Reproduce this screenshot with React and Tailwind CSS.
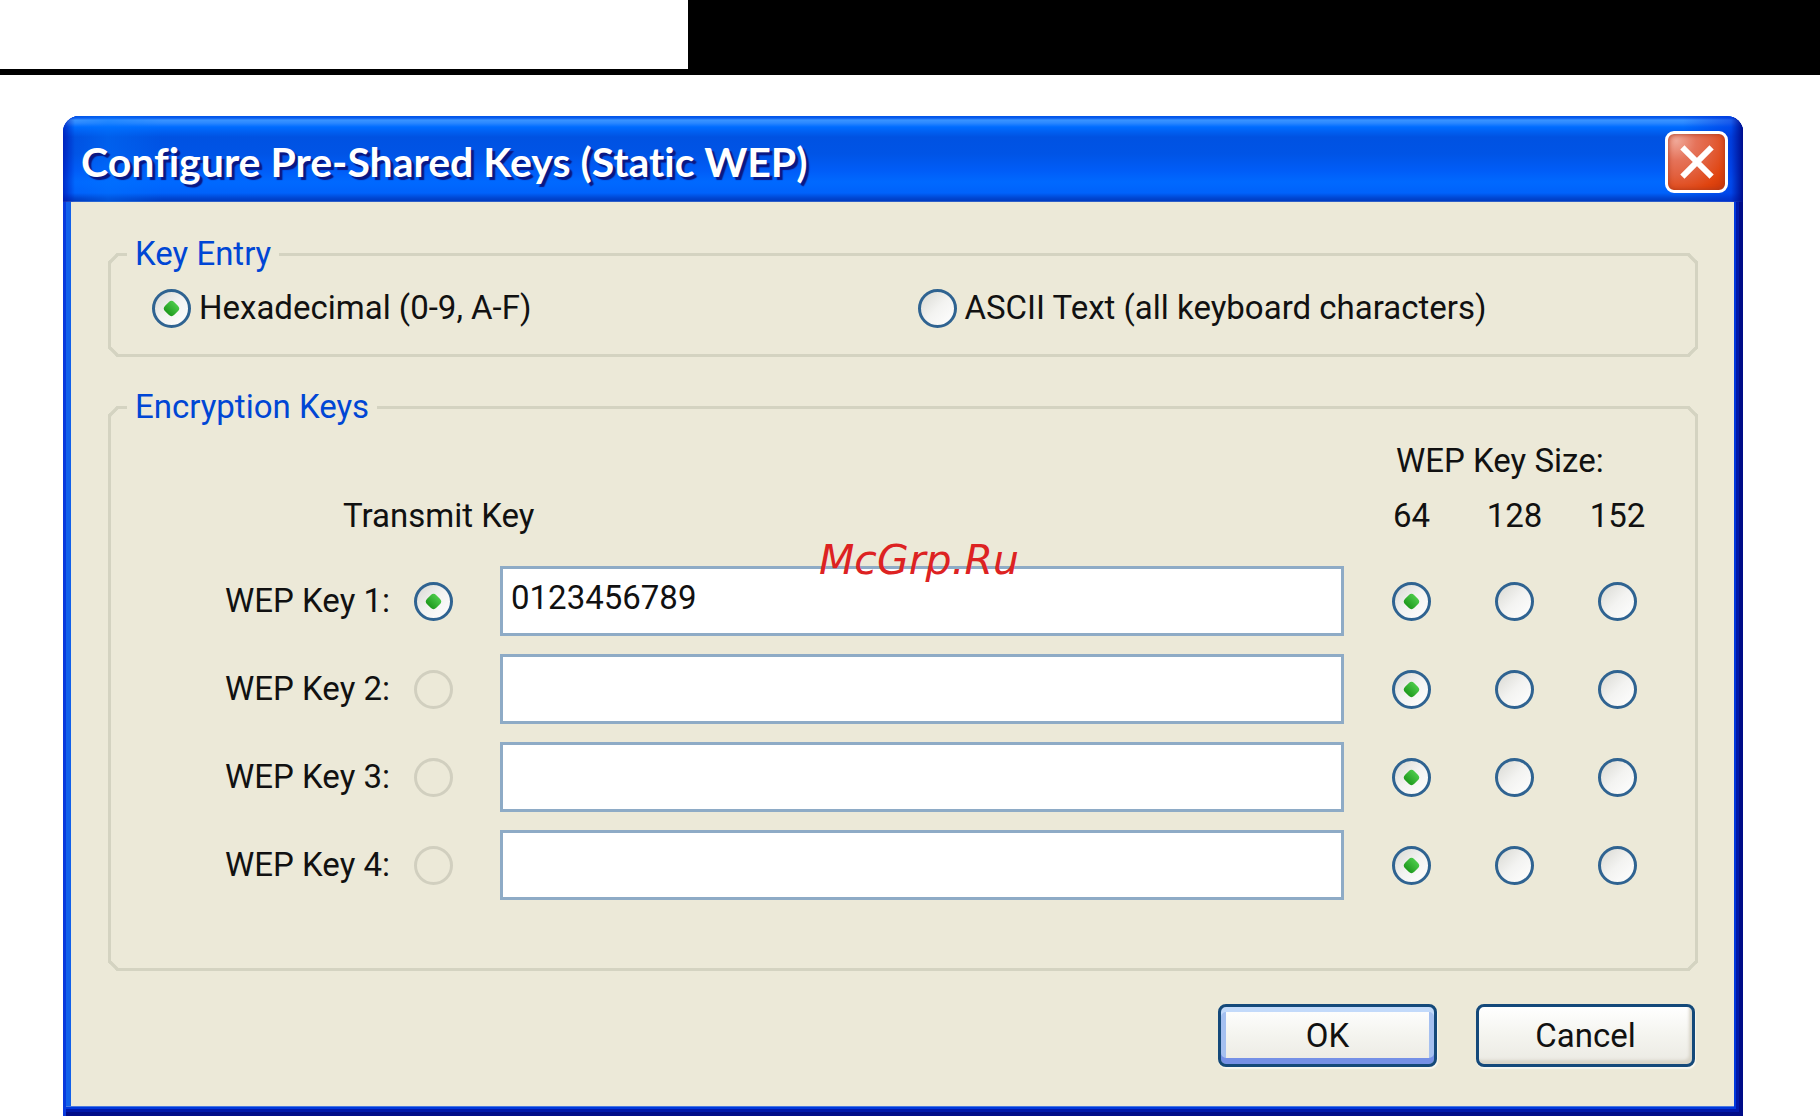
import React, { useState } from "react";

const KEY_SIZES = ["64", "128", "152"];

const ROW_COLS = "grid grid-cols-[279px_86px_minmax(0,1fr)_103px_103px_103px] items-center";

const Radio = (props) => (
  <input
    type="radio"
    className="
      grid shrink-0 size-[39px] appearance-none place-content-center rounded-full
      border-[3px] border-[#2f6391]
      bg-linear-135 from-[#d9d9d3] via-[#f3f3f1] to-white
      before:size-[13px] before:rotate-45 before:rounded-[4px]
      checked:before:bg-linear-to-b checked:before:from-[#4bcb4a] checked:before:to-[#1d9a1c]
      disabled:border-[#d1cfbf] disabled:bg-none
    "
    {...props}
  />
);

const GroupBox = ({ title, className, children }) => (
  <fieldset className={`rounded-[9px] border-[3px] border-[#d4d3c1] [corner-shape:bevel] ${className}`}>
    <legend className="ml-4 px-2 text-[#0046d5]">{title}</legend>
    {children}
  </fieldset>
);

const DialogButton = ({ className, children, ...rest }) => (
  <button
    type="button"
    className={`h-[63px] w-[219px] rounded-[8px] border-[3px] border-[#14497a] bg-linear-to-b from-white via-[#f4f4ef] to-[#ebeae3] ${className}`}
    {...rest}
  >
    {children}
  </button>
);

const TitleBar = () => (
  <div
    className="
      flex h-[86px] items-center justify-between rounded-t-[16px] pt-1.5 pl-[18px] pr-[15px]
      bg-[linear-gradient(90deg,rgba(0,10,170,0.65)_0,rgba(0,20,200,0)_12px,rgba(0,120,255,0.35)_45px,rgba(0,90,255,0)_100px,rgba(0,20,200,0)_calc(100%-60px),rgba(0,40,215,0.5)_calc(100%-12px),#000d8c_100%),linear-gradient(180deg,#0054e8_0,#0a5cee_2px,#3a94ff_4px,#2b88ff_7px,#006cff_11px,#0052e2_21px,#0054e6_38px,#005df8_55px,#0069ff_66px,#0062fb_77px,#0046d2_82px,#003cc0_85px,#5d82cf_86px)]
    "
  >
    <h1 className="font-['Lato',sans-serif] text-[41px] leading-[48px] font-bold text-white [font-variant-ligatures:none] [text-shadow:3px_3px_1px_#0a1883]">
      Configure Pre-Shared Keys (Static WEP)
    </h1>
    <button
      type="button"
      aria-label="Close"
      className="
        flex h-[62px] w-[63px] items-center justify-center rounded-[9px] border-[3px] border-white
        bg-[radial-gradient(circle_at_15%_12%,#f0a898_0,#e5735a_28%,#e2613f_50%,#e0440f_78%,#c93408_100%)]
        shadow-[inset_0_0_5px_#a83a20]
      "
    >
      <svg viewBox="0 0 34 34" className="size-[34px]" stroke="white" strokeWidth="6" strokeLinecap="square">
        <path d="M4.5 4.5 29.5 29.5M29.5 4.5 4.5 29.5" />
      </svg>
    </button>
  </div>
);

const App = () => {
  const [entry, setEntry] = useState("hex");
  const [transmitKey, setTransmitKey] = useState(1);
  const [keys, setKeys] = useState([
    { id: 1, value: "0123456789", size: "64" },
    { id: 2, value: "", size: "64" },
    { id: 3, value: "", size: "64" },
    { id: 4, value: "", size: "64" },
  ]);

  const updateKey = (id, patch) => {
    setKeys((prev) => prev.map((k) => (k.id === id ? { ...k, ...patch } : k)));
  };

  return (
    <div className="relative bg-white font-['Roboto',sans-serif] text-[33px] leading-10 text-[#111]">

      {/* Page banner */}
      <div className="flex h-[75px] justify-end border-b-[6px] border-black">
        <div className="w-[62.2%] bg-black" />
      </div>

      {/* Dialog */}
      <main
        className="
          mt-[41px] ml-[63px] mr-[77px] rounded-t-[16px] bg-[#1261ea]
          shadow-[inset_3px_0_#083ade,inset_-4px_-4px_#000c88,inset_-7px_-7px_#0018aa,inset_-9px_-9px_#0038dc,inset_-10px_-10px_#4a78e0]
        "
      >
        <TitleBar />

        <div className="pl-2 pr-[9px] pb-[10px]">
          <div className="bg-[#ece9d8] pt-8 pr-9 pb-[39px] pl-[37px]">

            <GroupBox title="Key Entry" className="pb-[26px]">
              <div className="mt-[14px] grid grid-cols-2 pr-3 pl-[41px]">
                <label className="flex items-center gap-2">
                  <Radio name="entry" checked={entry === "hex"} onChange={() => setEntry("hex")} />
                  Hexadecimal (0-9, A-F)
                </label>
                <label className="flex items-center gap-2">
                  <Radio name="entry" checked={entry === "ascii"} onChange={() => setEntry("ascii")} />
                  ASCII Text (all keyboard characters)
                </label>
              </div>
            </GroupBox>

            <GroupBox title="Encryption Keys" className="mt-[30px] pb-[68px]">
              <div className="flex flex-col gap-[18px] pt-[14px] pr-[26px]">
                <div className="mb-3 flex flex-col gap-[15px]">
                  <div className={ROW_COLS}>
                    <span className="col-span-3 col-start-4 pl-9">WEP Key Size:</span>
                  </div>
                  <div className={ROW_COLS}>
                    <span className="col-span-3 pl-[232px]">Transmit Key</span>
                    {KEY_SIZES.map((size) => (
                      <span key={size} className="text-center">{size}</span>
                    ))}
                  </div>
                </div>

                {keys.map((k) => (
                  <div key={k.id} className={ROW_COLS}>
                    <label htmlFor={`key-${k.id}`} className="text-right">WEP Key {k.id}:</label>
                    <div className="flex justify-center">
                      <Radio
                        name="transmit"
                        aria-label={`Transmit key ${k.id}`}
                        checked={transmitKey === k.id}
                        disabled={!k.value}
                        onChange={() => setTransmitKey(k.id)}
                      />
                    </div>
                    <input
                      id={`key-${k.id}`}
                      type="text"
                      value={k.value}
                      onChange={(e) => updateKey(k.id, { value: e.target.value })}
                      className="mr-4 ml-6 h-[70px] border-[3px] border-[#8eabc6] bg-white px-2 pb-2 outline-none"
                    />
                    {KEY_SIZES.map((size) => (
                      <div key={size} className="flex justify-center">
                        <Radio
                          name={`size-${k.id}`}
                          aria-label={`WEP key ${k.id}, ${size} bit`}
                          checked={k.size === size}
                          onChange={() => updateKey(k.id, { size })}
                        />
                      </div>
                    ))}
                  </div>
                ))}
              </div>
            </GroupBox>

            <div className="mt-[33px] flex justify-end gap-[39px] pr-[3px]">
              <DialogButton className="shadow-[inset_0_5px_#c3dafa,inset_0_-6px_#7590e6,inset_5px_0_#a5c0f0,inset_-5px_0_#a5c0f0,1px_2px_1px_#f8f7f0]">
                OK
              </DialogButton>
              <DialogButton className="shadow-[inset_-3px_-4px_3px_#d9d5c9,1px_2px_1px_#f8f7f0]">
                Cancel
              </DialogButton>
            </div>
          </div>
        </div>
      </main>

      {/* Watermark */}
      <span className="pointer-events-none absolute top-[540px] left-[45%] font-['DejaVu_Sans',sans-serif] text-[41px] text-[#dd2222] italic">
        McGrp.Ru
      </span>
    </div>
  );
};

export default App;
